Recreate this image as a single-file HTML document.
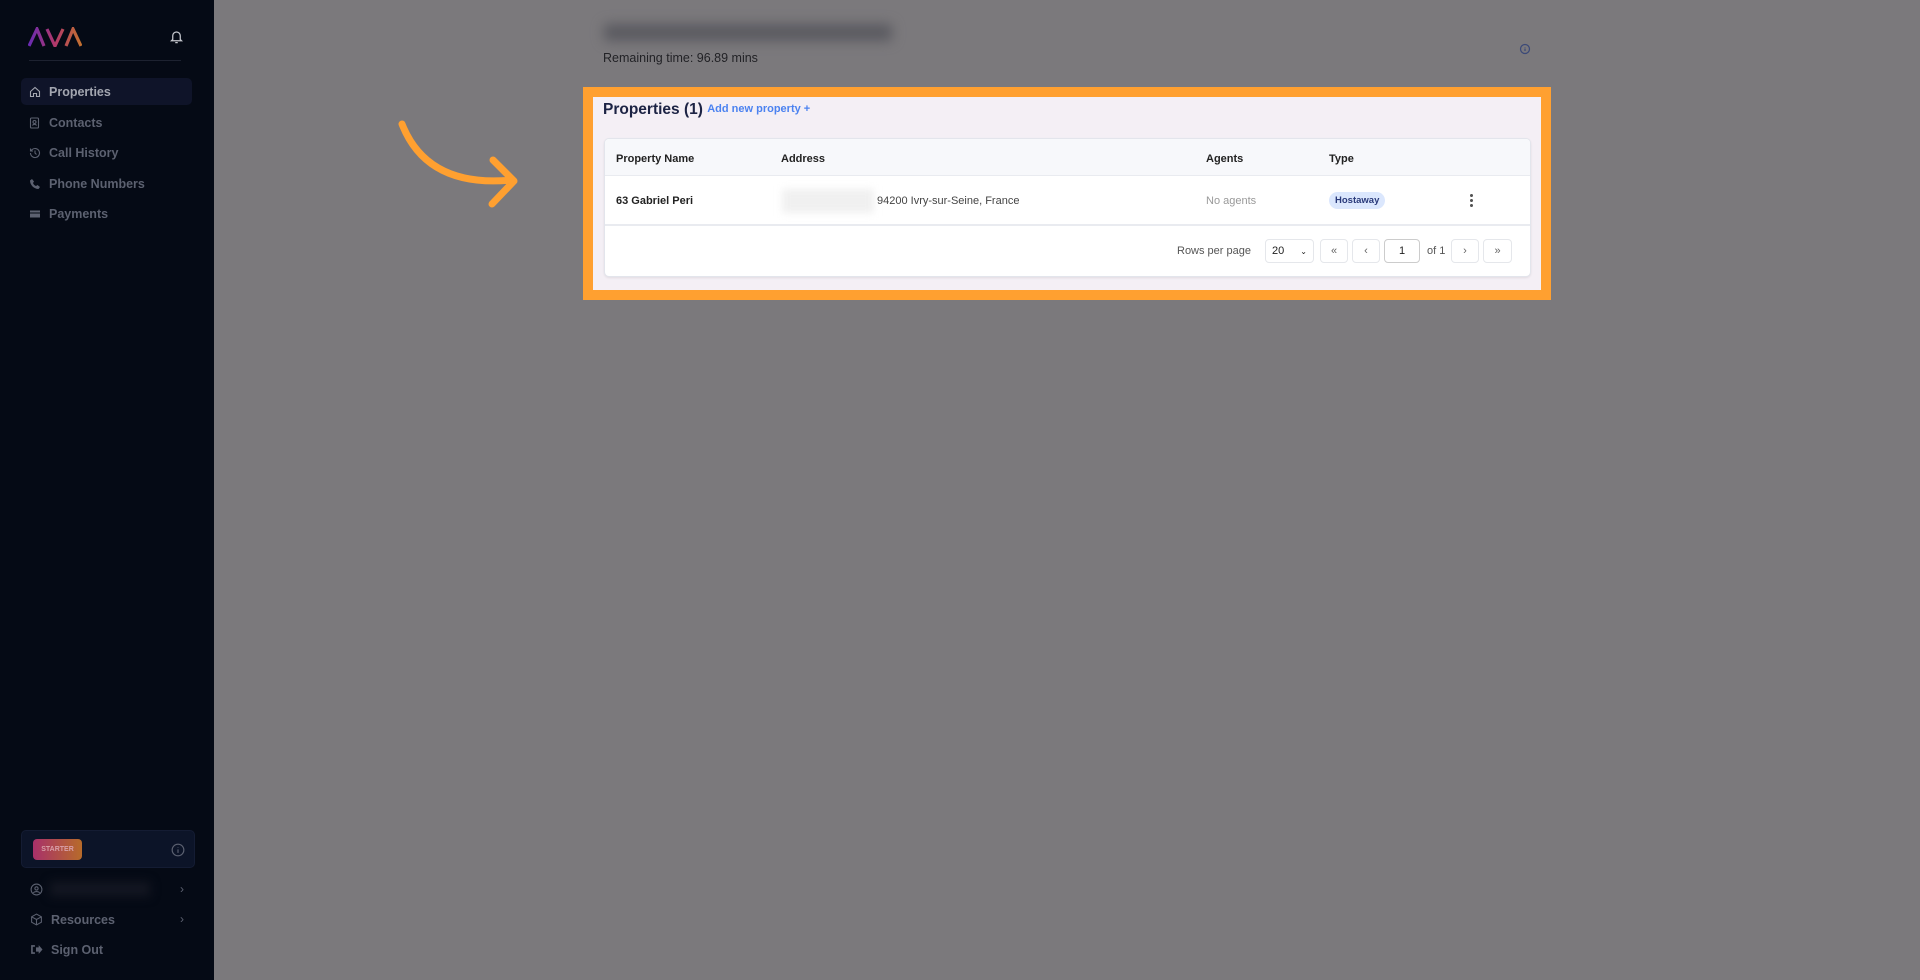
<!DOCTYPE html>
<html><head><meta charset="utf-8"><style>
*{box-sizing:border-box;margin:0;padding:0}
body{width:1920px;height:980px;overflow:hidden;background:#7b797c;font-family:"Liberation Sans",sans-serif;position:relative}
.sb{position:absolute;left:0;top:0;width:214px;height:980px;background:#050a15}
.nav{position:absolute;left:21px;width:171px;height:27px;display:flex;align-items:center;padding-left:8px;color:#5c6170;font-size:12.5px;font-weight:bold}
.nav svg{margin-right:8px}
.nav.act{background:#0f1429;border-radius:5px;color:#a3a6b0}
.abs{position:absolute}
.th{position:absolute;top:153px;font-size:11px;font-weight:bold;color:#222}
.btn{position:absolute;top:239px;height:24px;border:1px solid #e5e7eb;border-radius:4px;background:#fff;font-size:11px;color:#666;display:flex;align-items:center;justify-content:center}
</style></head><body>
<div class="sb">
  <svg class="abs" style="left:28px;top:27px" width="54" height="20" viewBox="0 0 54 20"><defs><linearGradient id="g" x1="0" x2="1"><stop offset="0" stop-color="#6a2bb3"/><stop offset=".5" stop-color="#b2386a"/><stop offset="1" stop-color="#c27030"/></linearGradient></defs><path d="M1 19 L9 2 L16 19 M19 2 L27 19 L35 2 M38 19 L45 2 L53 19" fill="none" stroke="url(#g)" stroke-width="3.2"/></svg>
  <svg class="abs" style="left:169px;top:29px" width="15" height="16" viewBox="0 0 24 24" fill="none" stroke="#c6c8ce" stroke-width="2"><path d="M6 16V10a6 6 0 0112 0v6l2 2H4z M10 21h4"/></svg>
  <div class="abs" style="left:29px;top:60px;width:152px;height:1px;background:#1d2230"></div>
  <div class="nav act" style="top:78px"><svg width="12" height="12" viewBox="0 0 24 24" fill="none" stroke="#a3a6b0" stroke-width="2.2"><path d="M3 11l9-8 9 8v10h-6v-6h-6v6H3z"/></svg>Properties</div>
  <div class="nav" style="top:109px"><svg width="12" height="12" viewBox="0 0 24 24" fill="none" stroke="#5c6170" stroke-width="2.2"><rect x="3" y="2" width="16" height="20" rx="2"/><circle cx="11" cy="10" r="3"/><path d="M7 17c1-3 7-3 8 0"/></svg>Contacts</div>
  <div class="nav" style="top:139px"><svg width="12" height="12" viewBox="0 0 24 24" fill="none" stroke="#5c6170" stroke-width="2.2"><path d="M3 12a9 9 0 103-6.7L3 8M3 3v5h5M12 7v5l3 3"/></svg>Call History</div>
  <div class="nav" style="top:170px"><svg width="12" height="12" viewBox="0 0 24 24" fill="#5c6170"><path d="M6 2l4 5-2 3c1 3 3 5 6 6l3-2 5 4-3 4C10 22 2 14 2 5z"/></svg>Phone Numbers</div>
  <div class="nav" style="top:200px"><svg width="12" height="12" viewBox="0 0 24 24" fill="#5c6170"><path d="M2 5h20v4H2zM2 11h20v8H2z"/></svg>Payments</div>
  <div class="abs" style="left:21px;top:830px;width:174px;height:38px;background:#0c1428;border:1px solid #141c33;border-radius:5px"></div>
  <div class="abs" style="left:33px;top:839px;width:49px;height:21px;border-radius:4px;background:linear-gradient(90deg,#a8306a,#b76b2a);color:#d9a0a8;font-size:7px;font-weight:bold;display:flex;align-items:center;justify-content:center">STARTER</div>
  <svg class="abs" style="left:171px;top:843px" width="14" height="14" viewBox="0 0 24 24" fill="none" stroke="#5b6070" stroke-width="2"><circle cx="12" cy="12" r="10"/><path d="M12 11v6M12 7v1"/></svg>
  <svg class="abs" style="left:30px;top:883px" width="13" height="13" viewBox="0 0 24 24" fill="none" stroke="#5c6170" stroke-width="2"><circle cx="12" cy="12" r="10"/><circle cx="12" cy="10" r="3"/><path d="M6 18c3-3 9-3 12 0"/></svg>
  <div class="abs" style="left:50px;top:882px;width:100px;height:14px;background:#141722;filter:blur(5px)"></div>
  <div class="abs" style="left:180px;top:882px;color:#5c6170;font-size:12px">›</div>
  <div class="nav" style="top:906px;left:22px"><svg width="13" height="13" viewBox="0 0 24 24" fill="none" stroke="#5c6170" stroke-width="2"><path d="M12 2l9 5v10l-9 5-9-5V7zM3 7l9 5 9-5M12 12v10"/></svg>Resources</div>
  <div class="abs" style="left:180px;top:912px;color:#5c6170;font-size:12px">›</div>
  <div class="nav" style="top:936px;left:21px"><svg width="14" height="13" viewBox="0 0 24 24" fill="#5c6170"><path d="M3 4h7v3H6v10h4v3H3zM12 8h5V4l7 8-7 8v-4h-5z"/></svg>Sign Out</div>
</div>
<div class="abs" style="left:604px;top:24px;width:288px;height:17px;background:#5a5a60;filter:blur(6px);border-radius:4px"></div>
<div class="abs" style="left:603px;top:51px;font-size:12.5px;color:#222226">Remaining time: 96.89 mins</div>
<svg class="abs" style="left:1519px;top:43px" width="12" height="12" viewBox="0 0 24 24" fill="none" stroke="#3c4a78" stroke-width="2.5"><circle cx="12" cy="12" r="9"/><path d="M12 11v5M12 8v1"/></svg>
<svg class="abs" style="left:390px;top:110px" width="140" height="105" viewBox="0 0 140 105"><path d="M12 14 C30 60 70 75 122 70 M103 50 L124 71 L102 94" fill="none" stroke="#ffa030" stroke-width="7" stroke-linecap="round" stroke-linejoin="round"/></svg>
<div class="abs" style="left:583px;top:87px;width:968px;height:213px;background:#ffa030"></div>
<div class="abs" style="left:593px;top:97px;width:948px;height:193px;background:#f4eff5"></div>
<div class="abs" style="left:603px;top:101px;font-size:15.5px;font-weight:bold;color:#1c2344">Properties (1) <span style="font-size:11px;color:#4b82f0;font-weight:bold;position:relative;top:-2px">Add new property +</span></div>
<div class="abs" style="left:604px;top:138px;width:927px;height:139px;background:#fff;border:1px solid #e3e5ec;border-radius:5px;box-shadow:0 1px 2px rgba(0,0,0,.08);overflow:hidden">
  <div style="height:37px;background:#f7f8fb;border-bottom:1px solid #e9ebf0"></div>
  <div style="height:50px;border-bottom:2px solid #e9ebf0"></div>
</div>
<div class="th" style="left:616px">Property Name</div>
<div class="th" style="left:781px">Address</div>
<div class="th" style="left:1206px">Agents</div>
<div class="th" style="left:1329px">Type</div>
<div class="abs" style="left:616px;top:195px;font-size:11px;font-weight:bold;color:#222">63 Gabriel Peri</div>
<div class="abs" style="left:782px;top:189px;width:92px;height:24px;background:#f0f0f0;filter:blur(4px)"></div>
<div class="abs" style="left:877px;top:195px;font-size:11px;color:#444">94200 Ivry-sur-Seine, France</div>
<div class="abs" style="left:1206px;top:195px;font-size:11px;color:#999">No agents</div>
<div class="abs" style="left:1329px;top:192px;padding:3px 6px;border-radius:9px;background:#dbe7fd;font-size:9.5px;font-weight:bold;color:#2a3a7a">Hostaway</div>
<div class="abs" style="left:1470px;top:193px;width:3px;height:14px;background:radial-gradient(circle,#555 1.4px,transparent 1.6px) 0 0/3px 5px"></div>
<div class="abs" style="left:1177px;top:245px;font-size:11px;color:#555">Rows per page</div>
<div class="btn" style="left:1265px;width:49px;justify-content:space-between;padding:0 6px;color:#222">20<span style="font-size:8px">⌄</span></div>
<div class="btn" style="left:1320px;width:28px">«</div>
<div class="btn" style="left:1352px;width:28px">‹</div>
<div class="btn" style="left:1384px;width:36px;color:#222;border-color:#ccc">1</div>
<div class="abs" style="left:1427px;top:245px;font-size:11px;color:#555">of 1</div>
<div class="btn" style="left:1451px;width:28px">›</div>
<div class="btn" style="left:1483px;width:29px">»</div>
</body></html>
